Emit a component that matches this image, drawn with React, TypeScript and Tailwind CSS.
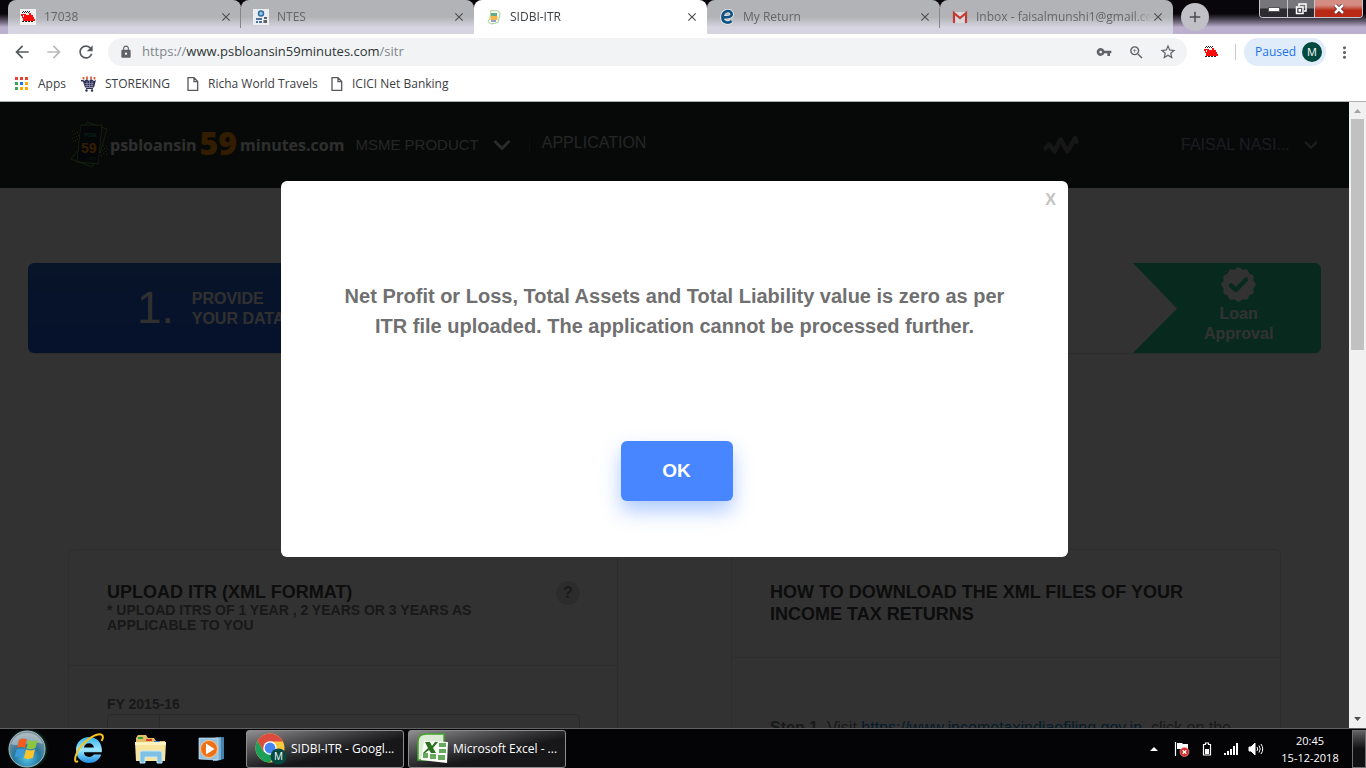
import type { ReactNode } from "react";
import {
  MdArrowBack,
  MdArrowForward,
  MdRefresh,
  MdLock,
  MdVpnKey,
  MdZoomIn,
  MdStarBorder,
  MdMoreVert,
  MdClose,
  MdAdd,
} from "react-icons/md";

const UI = "font-['Open_Sans','Noto_Sans',sans-serif]";

function TrainIcon({ plain = false }: { plain?: boolean }) {
  return (
    <svg viewBox="0 0 16 16" className="size-4 shrink-0" shapeRendering="crispEdges" aria-hidden="true">
      {!plain && <rect width="16" height="16" fill="#f1f1f1" />}
      <path fill="#222" d="M3 2h1v1H3zM5 2h1v1H5zM7 2h1v1H7zM9 2h1v1H9zM2 3h1v1H2zM4 3h1v1H4zM6 3h1v1H6zM8 3h1v1H8z" />
      <path fill="#f90d0d" d="M1 5h5v1h3V4h2v2h2v2h1v2h1v2H3V9H2V7H1z" />
      <path fill="#fff" d="M3 6h1v2H3z" />
      <path fill="#222" d="M2 12h2v1H2zM5 12h2v1H5zM8 12h2v1H8zM11 12h2v1h-2z" />
    </svg>
  );
}

function NtesIcon() {
  return (
    <svg viewBox="0 0 16 16" className="size-4 shrink-0" aria-hidden="true">
      <rect width="16" height="16" fill="#ecedf0" />
      <circle cx="8" cy="4.500" r="2.500" fill="#9fc4df" stroke="#2c6ea3" strokeWidth="1.500" />
      <path d="M3 9h6v2H3zM3 12h2v2H3zM6 12h3v2H6z" fill="#4f719d" />
      <path d="M11 8h3v2h-3zM10.500 11h3.500v3h-3.500z" fill="#5c6068" />
    </svg>
  );
}

function SidbiIcon() {
  return (
    <svg viewBox="0 0 16 16" className="size-4 shrink-0" aria-hidden="true">
      <path d="M5 1.500 12.500 2 14 5 12 13.500 5 15 2 12.500 4 9z" fill="#fff" stroke="#a5d192" strokeWidth="1" />
      <rect x="5" y="4" width="6" height="3" fill="#5fae88" />
      <rect x="4.500" y="7" width="7" height="4" fill="#f7b54a" />
      <rect x="5" y="11" width="5" height="2" fill="#8d9fd0" />
    </svg>
  );
}

function EdgeLetterIcon() {
  return (
    <svg viewBox="0 0 16 16" className="size-4 shrink-0" aria-hidden="true">
      <path
        d="M12.500 12c-3 2.800-9 1.900-9-3.500 0-7.500 9.200-8.500 9.200-3 0 2.300-2.700 2.900-6.800 2.900"
        fill="none"
        stroke="#e6e6ea"
        strokeWidth="4.500"
      />
      <path
        d="M12.500 12c-3 2.800-9 1.900-9-3.500 0-7.500 9.200-8.500 9.200-3 0 2.300-2.700 2.900-8 2.900"
        fill="none"
        stroke="#105383"
        strokeWidth="2.700"
      />
    </svg>
  );
}

function GmailIcon() {
  return (
    <svg viewBox="0 0 16 16" className="size-4 shrink-0" aria-hidden="true">
      <path d="M1 3h14v11H1z" fill="#d9d9dc" />
      <path d="M2 14V4l6 5 6-5v10" fill="none" stroke="#c23b32" strokeWidth="2.200" />
    </svg>
  );
}

function CartIcon() {
  return (
    <svg viewBox="0 0 16 16" className="size-4 shrink-0" aria-hidden="true">
      <path d="M2.500 3.500V1M6 3V.5M10 3V.5M13.500 3.500V1" stroke="#e0603a" strokeWidth="1.800" />
      <path d="M0 4h2.500l.5 1 3-2 2 2 2-2 3 2 2-1-2 7.500H4L2 5.500H0z" fill="#2e2f55" />
      <path d="M3.500 7.500h9M4 9.500h8M6 5v6M8.500 5v6M11 5v6" stroke="#a5a6c4" strokeWidth=".6" />
      <path d="M5 12.500h7" stroke="#2e2f55" />
      <circle cx="5.500" cy="14.500" r="1.200" fill="#2e2f55" />
      <circle cx="11" cy="14.500" r="1.200" fill="#2e2f55" />
    </svg>
  );
}

function PageIcon() {
  return (
    <svg viewBox="0 0 12 16" className="h-4 w-3 shrink-0" fill="none" stroke="#55585c" strokeWidth="1.300" aria-hidden="true">
      <path d="M1 1.700h6L10.700 5.500v8.800H1zM7 1.700v4h3.700" />
    </svg>
  );
}

function AppsIcon() {
  const colors = ["#ea4335", "#ea4335", "#ea4335", "#34a853", "#1a73e8", "#fbaa05", "#34a853", "#fbaa05", "#fbaa05"];
  return (
    <svg viewBox="0 0 14 14" className="size-[14px] shrink-0" shapeRendering="crispEdges" aria-hidden="true">
      {colors.map((c, i) => (
        <rect key={i} x={(i % 3) * 5} y={Math.floor(i / 3) * 5} width="3" height="3" fill={c} />
      ))}
    </svg>
  );
}

function Tab({ icon, title, active = false, divider = false }: { icon: ReactNode; title: string; active?: boolean; divider?: boolean }) {
  return (
    <div
      className={`relative flex h-full w-[233px] min-w-0 items-center rounded-t-lg pl-3 pr-2 ${
        active ? "bg-white text-[#3c4043]" : "bg-linear-to-b from-[#b2b3b7] from-50% to-[#d5d4e0] to-80% text-[#65666b]"
      }`}
    >
      {icon}
      <span className="ml-2 min-w-0 flex-1 overflow-hidden whitespace-nowrap mask-r-from-90% text-[12px]">{title}</span>
      <button aria-label={`Close ${title}`} className="text-[#4e5054]">
        <MdClose size={14} />
      </button>
      {divider && <span className="absolute right-0 top-2 h-5 w-px bg-[#85868b]" />}
    </div>
  );
}

function TabStrip() {
  return (
    <div className="flex h-[34px] shrink-0 bg-linear-to-b from-[#08060a] from-40% to-[#bcb0cf] to-80% pl-2">
      <Tab icon={<TrainIcon />} title="17038" divider />
      <Tab icon={<NtesIcon />} title="NTES" />
      <Tab icon={<SidbiIcon />} title="SIDBI-ITR" active />
      <Tab icon={<EdgeLetterIcon />} title="My Return" divider />
      <Tab icon={<GmailIcon />} title="Inbox - faisalmunshi1@gmail.co" />
      <button aria-label="New tab" className="ml-2 mt-[3px] flex size-7 shrink-0 items-center justify-center rounded-full bg-[#c0c0c6] text-[#4a4b50]">
        <MdAdd size={18} />
      </button>
      <div className="ml-auto mr-[3px] flex h-[18px] shrink-0 overflow-hidden rounded-b border border-t-0 border-[#c9c5cc]">
        <button aria-label="Minimize" className="flex w-7 items-center justify-center border-r border-[#c9c5cc] bg-linear-to-b from-[#77767b] from-45% to-[#2c2b31] to-55%">
          <svg viewBox="0 0 12 6" className="h-[6px] w-3"><rect x=".5" y="1.500" width="11" height="4" fill="#fff" stroke="#55565c" /></svg>
        </button>
        <button aria-label="Restore" className="flex w-[27px] items-center justify-center border-r border-[#c9c5cc] bg-linear-to-b from-[#77767b] from-45% to-[#2c2b31] to-55%">
          <svg viewBox="0 0 12 12" className="size-3" fill="none" stroke="#fff" strokeWidth="1.500">
            <path d="M4 3V1h7v7H9" />
            <path d="M1.500 4h6.500v6.500H1.500zM4.200 6.800h1.200v1.200H4.200z" />
          </svg>
        </button>
        <button aria-label="Close window" className="flex w-[47px] items-center justify-center bg-linear-to-b from-[#d58c82] from-30% to-[#b92a16] to-60%">
          <svg viewBox="0 0 12 10" className="h-[10px] w-3">
            <path d="m2 1 8 8M10 1 2 9" stroke="#58202a" strokeWidth="4" />
            <path d="m2 1 8 8M10 1 2 9" stroke="#fff" strokeWidth="2.500" />
          </svg>
        </button>
      </div>
    </div>
  );
}

function Toolbar() {
  return (
    <div className="flex h-9 shrink-0 items-center bg-white px-3 text-[#5f6368]">
      <button aria-label="Back" className="text-[#55585c]"><MdArrowBack size={20} /></button>
      <button aria-label="Forward" className="ml-3 text-[#b9bbbd]"><MdArrowForward size={20} /></button>
      <button aria-label="Reload" className="ml-3 text-[#55585c]"><MdRefresh size={20} /></button>
      <div className="ml-3 flex h-7 min-w-0 flex-1 items-center rounded-full bg-[#f1f3f4] px-[10px]">
        <MdLock size={14} className="ml-px shrink-0" />
        <div className="ml-[9px] flex-1 whitespace-nowrap text-[13px] text-[#80868b]">
          https://<span className="text-[#303336]">www.psbloansin59minutes.com</span>/sitr
        </div>
        <button aria-label="Saved passwords"><MdVpnKey size={16} /></button>
        <button aria-label="Zoom" className="ml-4"><MdZoomIn size={17} /></button>
        <button aria-label="Bookmark this page" className="ml-[14px]"><MdStarBorder size={18} /></button>
      </div>
      <div className="ml-4"><TrainIcon plain /></div>
      <span className="ml-4 h-4 w-px bg-[#c8cacd]" />
      <button className="ml-2 flex h-7 w-[82px] items-center justify-between rounded-full bg-[#e1ecfb] pl-[11px] pr-1 text-[12px] text-[#1a73e8]">
        Paused
        <span className="flex size-5 items-center justify-center rounded-full bg-[#00493f] text-[11px] text-white">M</span>
      </button>
      <button aria-label="Menu" className="ml-[9px]"><MdMoreVert size={19} /></button>
    </div>
  );
}

function Bookmarks() {
  return (
    <nav className="flex h-8 shrink-0 items-center whitespace-nowrap border-b border-[#aeb0b2] bg-white pb-1 pl-[15px] text-[12px] text-[#3c4043]">
      <a href="#apps" className="flex w-[66px] items-center gap-[9px]"><AppsIcon />Apps</a>
      <a href="#storeking" className="flex w-[106px] items-center gap-2"><CartIcon />STOREKING</a>
      <a href="#richa" className="flex w-36 items-center gap-[9px]"><PageIcon />Richa World Travels</a>
      <a href="#icici" className="flex items-center gap-[9px]"><PageIcon />ICICI Net Banking</a>
    </nav>
  );
}

function BrandMark() {
  return (
    <svg viewBox="0 0 38 48" className="h-12 w-[38px] shrink-0" aria-hidden="true">
      <g fill="none" stroke="#5a9c40" strokeWidth="1">
        <path d="M11 4h21l-4 39-21-2z" />
        <path d="M16 4 17 1l20 7-7 24M7 30 1 38l21 8 2-4" />
      </g>
      <path d="M11 5h20l-3 36-20-2z" fill="#1b2030" />
      <g fill="#8cac40">
        {[0, 1, 2, 3, 4, 5, 6, 7, 8, 9, 10, 11].map((i) => (
          <g key={i}>
            <rect x={2 + ((i * 5) % 7)} y={10 + i} width="1" height="1" />
            <rect x={30 + ((i * 3) % 8)} y={23 + i} width="1" height="1" />
          </g>
        ))}
      </g>
      <text x="14" y="16" fontSize="6" fontWeight="700" fill="#1ca050" fontFamily="Liberation Sans">PSB</text>
      <text x="11" y="32" fontSize="14" fontWeight="700" fill="#ff9000" fontFamily="Liberation Sans">59</text>
      <text x="18" y="39" fontSize="4" fill="#2e9040" fontFamily="Liberation Sans">GST</text>
    </svg>
  );
}

function Chevron({ className }: { className: string }) {
  return (
    <svg viewBox="0 0 18 12" className={className} fill="none" stroke="currentColor" strokeWidth="3" aria-hidden="true">
      <path d="m1.500 2 7.500 7.500L16.500 2" />
    </svg>
  );
}

function SiteHeader() {
  return (
    <header className="flex h-[86px] shrink-0 items-center whitespace-nowrap bg-[#232d28] pl-[70px] pr-[31px] text-[#b8b8b8]">
      <BrandMark />
      <div className="ml-[2px] flex items-center font-['Open_Sans','Noto_Sans',sans-serif] font-bold text-[#e6e6e6]">
        <span className="text-[16px]">psbloansin</span>
        <span className="mx-[3px] pb-1 text-[32px] font-extrabold leading-10 text-[#ff9000]">59</span>
        <span className="text-[16px]">minutes.com</span>
      </div>
      <button className="ml-[11px] flex items-center text-[15px]">
        MSME PRODUCT
        <Chevron className="ml-[14px] h-3 w-[18px] text-[#d0d0d0]" />
      </button>
      <span className="ml-[18px] h-4 w-px bg-[#3c4641]" />
      <a href="#application" className="ml-3 mb-1 text-[16px]">APPLICATION</a>
      <svg viewBox="0 0 36 20" className="ml-auto h-5 w-9" fill="none" stroke="#6e6e6e" strokeWidth="4.500" strokeLinecap="round" strokeLinejoin="round" aria-hidden="true">
        <path d="m2.500 13 4-3.500 5 7 6-12 7 12L32 3l1.500 4" />
      </svg>
      <button className="ml-[102px] flex w-[137px] items-center justify-between text-[16px] text-[#868aa8]">
        FAISAL NASI...
        <Chevron className="h-[10px] w-[14px] text-[#8a8a94]" />
      </button>
    </header>
  );
}

function SealCheck() {
  const points: string[] = [];
  for (let i = 0; i < 96; i++) {
    const a = (i / 96) * Math.PI * 2;
    const r = 16.300 + Math.cos(a * 12) * 0.900;
    points.push(`${(17.500 + r * Math.sin(a)).toFixed(2)},${(17.500 - r * Math.cos(a)).toFixed(2)}`);
  }
  return (
    <svg viewBox="0 0 35 35" className="size-[35px]" aria-hidden="true">
      <polygon points={points.join(" ")} fill="#fafafa" />
      <path d="m10 18.500 5 4.500L25 12.500" fill="none" stroke="#28cd96" strokeWidth="4.500" strokeLinecap="round" strokeLinejoin="round" />
    </svg>
  );
}

function Steps() {
  return (
    <div className="mx-7 mt-[75px] flex h-[90px] shrink-0 overflow-hidden rounded-md bg-[#fafafa] font-bold shadow-[0_1px_1px_#d8d8d8]">
      <div className="flex flex-1 items-center bg-linear-to-b from-[#2a64c8] to-[#1e5adc] pl-[109px] text-[#f0f0f0]">
        <span className="text-[44px] font-normal">1.</span>
        <span className="ml-[18px] pt-px text-[16px] leading-5">PROVIDE<br />YOUR DATA</span>
      </div>
      <div className="flex-1" />
      <div className="flex-1" />
      <div className="flex w-[188px] bg-[#28cd96] text-[#fafafa]">
        <svg viewBox="0 0 45 90" className="h-full w-[45px] shrink-0" aria-hidden="true">
          <path d="M0 0 44 45.500 0 90z" fill="#fafafa" />
        </svg>
        <div className="flex flex-col items-center gap-0 pl-[26px] pt-1 text-[16px] leading-5">
          <SealCheck />
          <span className="pt-[2px]">Loan</span>
          <span>Approval</span>
        </div>
      </div>
    </div>
  );
}

function Cards() {
  return (
    <div className="mx-[68px] mt-[196px] grid min-h-0 grow grid-cols-2 gap-[113px] text-[#414141]">
      <section className="rounded-t-md border border-b-0 border-[#e1e1e1]">
        <div className="flex h-[116px] items-start justify-between border-b border-[#e1e1e1] pl-[38px] pr-[37px] pt-[31px]">
          <div className="w-[400px] font-bold">
            <h2 className="text-[18px] leading-[22px]">UPLOAD ITR (XML FORMAT)</h2>
            <p className="text-[14px] leading-[15px] text-[#787878]">* UPLOAD ITRS OF 1 YEAR , 2 YEARS OR 3 YEARS AS APPLICABLE TO YOU</p>
          </div>
          <button aria-label="Help" className="flex size-6 items-center justify-center rounded-full bg-[#dcdcdc] text-[16px] font-bold text-[#828282]">?</button>
        </div>
        <div className="pl-[38px] pr-[37px] pt-7">
          <label htmlFor="fy-2015" className="block text-[14px] font-bold leading-5 text-[#787878]">FY 2015-16</label>
          <div className="flex h-10 rounded-sm border border-[#d2d2d2]">
            <span className="w-[52px] border-r border-[#d2d2d2]" />
            <input id="fy-2015" className="min-w-0 flex-1 bg-transparent" />
          </div>
        </div>
      </section>
      <section className="rounded-t-md border border-b-0 border-[#e1e1e1]">
        <div className="h-[108px] border-b border-[#e1e1e1] pl-[38px] pr-16 pt-[31px]">
          <h2 className="text-[18px] font-bold leading-[22px]">HOW TO DOWNLOAD THE XML FILES OF YOUR INCOME TAX RETURNS</h2>
        </div>
        <p className="whitespace-nowrap pl-[38px] pt-[58px] text-[16px] leading-6 text-[#787878]">
          <b>Step 1.</b> Visit{" "}
          <a href="#efiling" className="text-[#0a84c4] underline">https://www.incometaxindiaefiling.gov.in</a>, click on the
        </p>
      </section>
    </div>
  );
}

function Dialog() {
  return (
    <div className="absolute inset-0 flex items-start justify-center bg-black/80 pt-[79px]">
      <div role="dialog" aria-modal="true" className="relative flex min-h-[376px] w-[787px] flex-col items-center rounded-md bg-white">
        <button aria-label="Close" className="absolute right-3 top-[9px] text-[16px] font-bold leading-5 text-[#c3c3c3]">X</button>
        <p className="mt-[100px] w-[680px] text-center text-[20px] font-bold leading-[30px] text-[#707070]">
          Net Profit or Loss, Total Assets and Total Liability value is zero as per ITR file uploaded. The application cannot be processed further.
        </p>
        <button className="ml-1 mt-[100px] h-[60px] w-28 rounded-md bg-[#4886ff] text-[19px] font-bold text-white shadow-[0_10px_20px_#4886ff70]">OK</button>
      </div>
    </div>
  );
}

function Scrollbar() {
  return (
    <div className="flex w-[17px] shrink-0 flex-col items-center bg-[#f1f1f1]" aria-hidden="true">
      <svg viewBox="0 0 17 17" className="size-[17px] shrink-0"><path d="M5 11h7L8.500 7z" fill="#a3a3a3" /></svg>
      <div className="h-[231px] w-[13px] bg-[#c1c1c1]" />
      <svg viewBox="0 0 17 17" className="mt-auto size-[17px] shrink-0"><path d="M5 6h7l-3.500 4z" fill="#505050" /></svg>
    </div>
  );
}

function WindowsOrb() {
  return (
    <svg viewBox="0 0 44 40" className="h-10 w-11" aria-hidden="true">
      <defs>
        <radialGradient id="orb" cx=".5" cy=".75" r=".65">
          <stop offset="0" stopColor="#55c6e8" />
          <stop offset=".55" stopColor="#26779f" />
          <stop offset="1" stopColor="#7c929c" />
        </radialGradient>
        <radialGradient id="halo">
          <stop offset=".7" stopColor="#1d6a52" />
          <stop offset="1" stopColor="#06080a" stopOpacity="0" />
        </radialGradient>
      </defs>
      <circle cx="23" cy="20" r="22" fill="url(#halo)" />
      <circle cx="22" cy="20" r="18" fill="url(#orb)" stroke="#a9bcc0" />
      <path d="M6 15a17 17 0 0 1 32 0c-10-4-22 4-32 0" fill="#fff" opacity=".35" />
      <path d="M14 11c3-2 5-2 8-.5L20 19c-3-1.500-5-1.500-8 0z" fill="#f25c1e" />
      <path d="M23.500 11c3 1.500 6 1.500 9-.2L30.500 19c-3 1.500-6 1.500-9 .2z" fill="#8cc63e" />
      <path d="M11.500 20.500c3-1.500 5-1.500 8 0l-2 8c-3-1.500-5-1.500-8 0z" fill="#3c9ad8" />
      <path d="M21 20.500c3 1.500 6 1.500 9-.2L28 28.800c-3 1.500-6 1.500-9 .2z" fill="#fdc42e" />
    </svg>
  );
}

function IeIcon() {
  return (
    <svg viewBox="0 0 32 32" className="size-8" aria-hidden="true">
      <defs>
        <linearGradient id="ieBlue" x1="0" y1="0" x2="0" y2="1">
          <stop offset="0" stopColor="#35b4ef" />
          <stop offset=".5" stopColor="#9ee6ff" />
          <stop offset="1" stopColor="#1c8ede" />
        </linearGradient>
      </defs>
      <path
        d="M16 4C8.500 4 3 9.500 3 17s5.500 13 13 13c6 0 10.500-3.300 12.300-8.500h-7.500c-1 1.600-2.500 2.400-4.700 2.400-3 0-5-1.800-5.200-4.700h18C29.500 10.500 24.500 4 16 4zm-5 10.500c.4-2.600 2.300-4.200 5-4.200s4.600 1.600 4.900 4.200z"
        fill="url(#ieBlue)"
      />
      <path d="M5 28C1 31 1 24 6 16 13 6 25-1 29 2c1.500 1.500.8 4-.5 6" fill="none" stroke="#f5c51b" strokeWidth="2" />
    </svg>
  );
}

function FolderIcon() {
  return (
    <svg viewBox="0 0 34 32" className="h-8 w-[34px]" aria-hidden="true">
      <path d="M2 5 4 2h8l2 3h6l2 3h9v18H2z" fill="#e5bd65" />
      <path d="M4 4h5v2H4z" fill="#2ca13c" />
      <path d="M12 6h6v2h-6z" fill="#d8402c" />
      <path d="M20 8h6v2h-6z" fill="#3684d0" />
      <path d="M1 9h31l-1 19H2z" fill="#f8e49c" />
      <path d="M1 9h31v3H1z" fill="#fff3bf" />
      <path d="M6 30V20q0-2 2-2h17q3 0 3 2v10h-5v-6H11v6z" fill="#7fc1e4" stroke="#c4e9fa" />
    </svg>
  );
}

function MediaIcon() {
  return (
    <svg viewBox="0 0 28 26" className="h-[26px] w-7" aria-hidden="true">
      <path d="m17 2 9-1v22l-9 2z" fill="#4482ad" />
      <path d="m15 2 8-1v23l-8 1z" fill="#75acd0" />
      <path d="M1 2h19v22l-19-1z" fill="#93c3e2" stroke="#d0e6f2" strokeWidth=".7" />
      <circle cx="11" cy="13" r="8.500" fill="#ee7118" stroke="#ffc48b" strokeWidth="1" />
      <path d="m8 7.500 8.500 5.500L8 18.500z" fill="#fff" />
    </svg>
  );
}

function ChromeIcon() {
  return (
    <svg viewBox="0 0 32 32" className="size-8 shrink-0" aria-hidden="true">
      <circle cx="15" cy="15" r="14.500" fill="#fbc940" />
      <path d="M15 15 2.500 7.700A14.500 14.500 0 0 1 27.500 7.700L28 8.500H15z" fill="#dd4b3e" />
      <path d="M2.500 7.700A14.500 14.500 0 0 0 15 29.500l6-10.500-12 0z" fill="#1fa05a" />
      <path d="M2.500 7.700 8.800 18.500 15 8.500z" fill="#dd4b3e" />
      <circle cx="15" cy="15" r="6.800" fill="#fff" />
      <circle cx="15" cy="15" r="5.400" fill="#4484f3" />
      <circle cx="23.500" cy="23.500" r="8" fill="#054a40" />
      <text x="23.500" y="27" fontSize="10" fill="#fff" textAnchor="middle" fontFamily="Open Sans">M</text>
    </svg>
  );
}

function ExcelIcon() {
  return (
    <svg viewBox="0 0 32 32" className="size-8 shrink-0" aria-hidden="true">
      <path d="M1 27V9q0-8 8-8h18v26z" fill="#dcebd5" stroke="#42a629" strokeWidth="1.500" />
      <path d="M7 8 31 9l-1 21L4 27z" fill="#fbfdf9" />
      <path d="M22 10h7v4h-7zM22 16h7v4h-7zM21 22h7v5h-7zM13 21h6v5h-6zM6 20h5v5H6z" fill="#66a95e" />
      <path d="M8 9h5l2 4 3-4h3l-5 6 3 5h-5l-2-3-4 3H6l5-5z" fill="#2a711f" />
    </svg>
  );
}

function TaskButton({ icon, label }: { icon: ReactNode; label: string }) {
  return (
    <button className="flex h-[38px] w-[158px] items-center gap-1 rounded-[3px] border border-[#8c8c8e] bg-linear-to-br from-[#909092] via-[#39393b] via-40% to-[#17171a] to-60% pl-2 text-[12px] text-white">
      {icon}
      <span className="whitespace-nowrap">{label}</span>
    </button>
  );
}

function Taskbar() {
  return (
    <footer className="flex h-10 shrink-0 items-center border-t border-[#626264] bg-[#040306] text-white">
      <button aria-label="Start" className="ml-[5px]"><WindowsOrb /></button>
      <button aria-label="Internet Explorer" className="ml-6"><IeIcon /></button>
      <button aria-label="Windows Explorer" className="ml-[29px]"><FolderIcon /></button>
      <button aria-label="Media Player" className="ml-[30px]"><MediaIcon /></button>
      <div className="ml-5 flex gap-1">
        <TaskButton icon={<ChromeIcon />} label="SIDBI-ITR - Googl..." />
        <TaskButton icon={<ExcelIcon />} label="Microsoft Excel - ..." />
      </div>
      <div className="ml-auto flex items-center">
        <svg viewBox="0 0 8 4" className="h-1 w-2" aria-hidden="true"><path d="M0 4h8L4 0z" fill="#fff" /></svg>
        <svg viewBox="0 0 16 16" className="ml-4 size-4" aria-hidden="true">
          <path d="M1.500 1v14" stroke="#fff" strokeWidth="1.200" />
          <path d="M3 2h5l1 1h5v6H9L8 8H3z" fill="#fff" />
          <circle cx="10.500" cy="11" r="4.500" fill="#d42a22" stroke="#f4b0ac" strokeWidth=".6" />
          <path d="m8.700 9.200 3.600 3.600m0-3.600-3.600 3.600" stroke="#fff" strokeWidth="1.400" />
        </svg>
        <svg viewBox="0 0 10 14" className="ml-[12px] h-[14px] w-[10px]" aria-hidden="true">
          <path d="M3.500 1h3v1.500h2v10.500h-7V2.500h2z" fill="none" stroke="#fff" strokeWidth="1.200" />
          <path d="M3 7h4v5H3z" fill="#fff" />
        </svg>
        <svg viewBox="0 0 15 12" className="ml-3 h-3 w-[15px]" shapeRendering="crispEdges" aria-hidden="true">
          <path d="M0 10h2v2H0zM3 8h2v4H3zM6 6h2v6H6zM9 3h2v9H9zM12 0h2v12h-2z" fill="#fff" />
        </svg>
        <svg viewBox="0 0 16 14" className="ml-[9px] h-[14px] w-4" fill="none" stroke="#fff" aria-hidden="true">
          <path d="M1 5h2l4-4v12L3 9H1z" fill="#fff" />
          <path d="M9 5q1.500 2 0 4M11 3.500q2.500 3.500 0 7M13 2q3.500 5 0 10" />
        </svg>
        <div className="ml-[15px] w-[62px] whitespace-nowrap text-center text-[11px] leading-[17px]">20:45<br />15-12-2018</div>
        <button aria-label="Show desktop" className="ml-[11px] h-[38px] w-[14px] border border-[#707072] bg-linear-to-b from-[#626264] to-[#111113] to-50%" />
      </div>
    </footer>
  );
}

export default function App() {
  return (
    <div className={`flex h-screen flex-col overflow-hidden ${UI}`}>
      <TabStrip />
      <Toolbar />
      <Bookmarks />
      <div className="flex min-h-0 flex-1">
        <main className="relative flex min-w-0 flex-1 flex-col overflow-hidden bg-[#fafafa] font-['Liberation_Sans',Arial,sans-serif]">
          <SiteHeader />
          <Steps />
          <Cards />
          <Dialog />
        </main>
        <Scrollbar />
      </div>
      <Taskbar />
    </div>
  );
}
